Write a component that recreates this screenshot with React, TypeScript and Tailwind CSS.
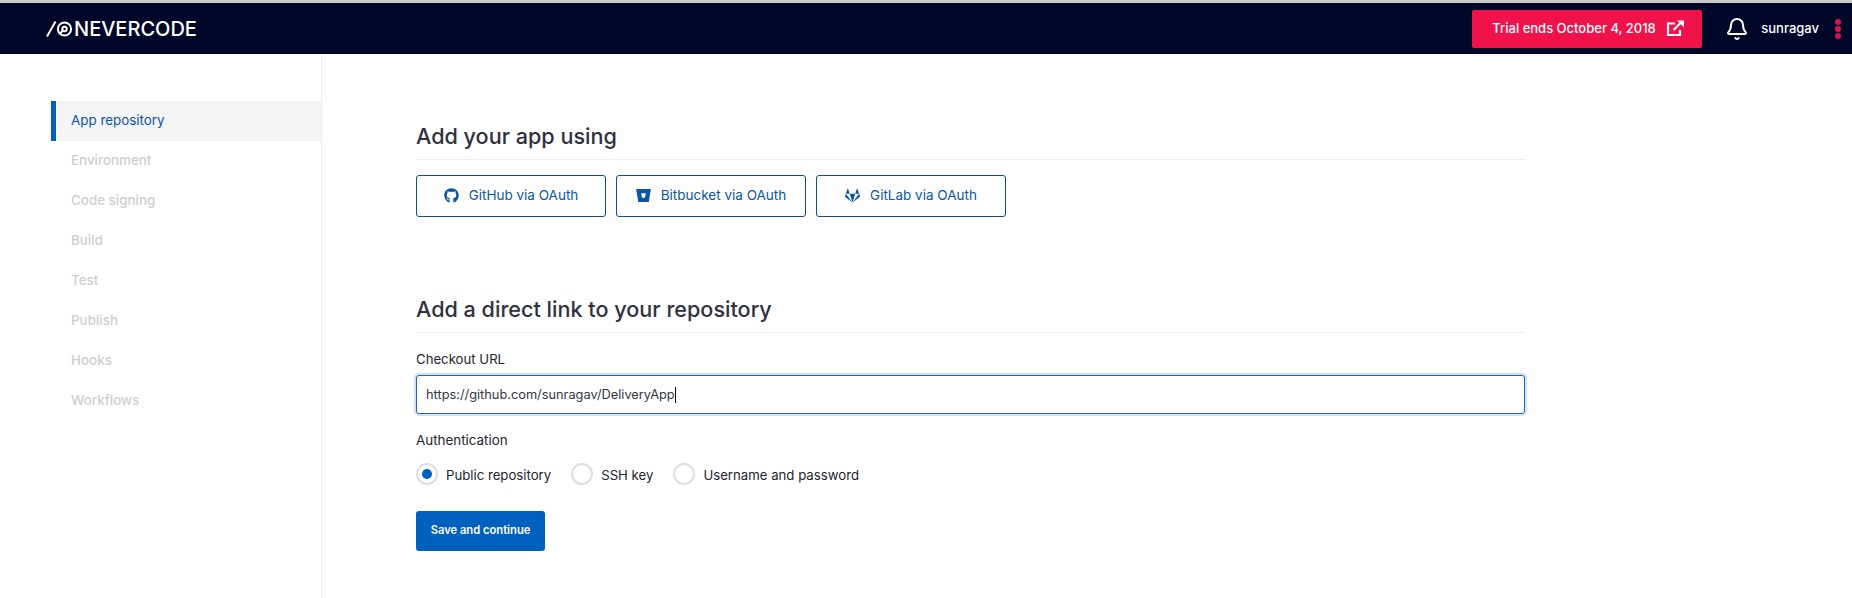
import React from "react";
import { Bell } from "lucide-react";
import { FaGithub, FaBitbucket, FaGitlab } from "react-icons/fa";

const font = { fontFamily: "Inter, 'Liberation Sans', sans-serif" };

const steps = ["Environment", "Code signing", "Build", "Test", "Publish", "Hooks", "Workflows"];

function Logo() {
  return (
    <div className="flex items-center text-white">
      <svg className="shrink-0" width="28" height="16" viewBox="0 0 28 16" fill="none" stroke="currentColor" strokeWidth="2">
        <path d="M1 15.5 L9.5 0.5" />
        <circle cx="18.5" cy="8" r="6.6" />
        <circle cx="18.5" cy="8" r="2.2" />
        <path d="M13.5 13 L17 9.5" />
      </svg>
      <span className="text-[20px] leading-none font-medium">NEVERCODE</span>
    </div>
  );
}

function ExternalIcon() {
  return (
    <svg width="19" height="17" viewBox="0 0 19 17" fill="none" stroke="currentColor" strokeWidth="2.2">
      <path d="M9 3.5 H2 V15 H14 V10" />
      <path d="M7.5 10 L15 2.5" />
      <path d="M11 0.5 H18 V7.5 Z" fill="currentColor" stroke="none" />
    </svg>
  );
}

function OauthButton({ icon, label }: { icon: React.ReactNode; label: string }) {
  return (
    <button className="flex h-[42px] w-[190px] items-center justify-center gap-[10px] rounded-[3px] border border-[#0b4f92] pb-[2px] text-[13.5px] text-[#0b55a5]">
      {icon}
      {label}
    </button>
  );
}

function Radio({ label, checked }: { label: string; checked?: boolean }) {
  return (
    <label className="flex items-center gap-2 text-[13.2px] text-[#22252e]">
      <span className="flex h-[22px] w-[22px] items-center justify-center rounded-full border-2 border-[#dedede]">
        {checked && <span className="h-[10px] w-[10px] rounded-full bg-[#0060bd]" />}
      </span>
      <span className="pt-[3px]">{label}</span>
    </label>
  );
}

export default function App() {
  return (
    <div className="flex h-[598px] flex-col overflow-hidden bg-white" style={font}>
      <div className="h-[3px] bg-[#c9c9c9]" />
      {/* top bar */}
      <header className="flex h-[51px] items-center justify-between bg-[#000729] pl-[46px] pr-[11px]">
        <Logo />
        <div className="flex items-center">
          <a className="flex h-[38px] w-[230px] items-center gap-[10px] rounded-[2px] bg-[#f0124a] pl-5 text-[13px] font-medium text-white">
            Trial ends October 4, 2018
            <ExternalIcon />
          </a>
          <Bell size={24} strokeWidth={2} className="ml-[23px] text-white" />
          <span className="ml-[12px] text-[13px] font-medium text-white">sunragav</span>
          <div className="ml-[16px] flex flex-col gap-[1px]">
            <span className="h-[6px] w-[6px] rounded-full bg-[#e0114a]" />
            <span className="h-[6px] w-[6px] rounded-full bg-[#e0114a]" />
            <span className="h-[6px] w-[6px] rounded-full bg-[#e0114a]" />
          </div>
        </div>
      </header>

      <div className="flex flex-1">
        {/* sidebar */}
        <aside className="w-[322px] border-r border-[#eeeeee] pl-[51px] pt-[47px]">
          <div className="flex h-10 items-center border-l-[5px] border-[#0060bd] bg-[#f4f4f4] pb-[1px] pl-[15px] text-[13.4px] text-[#0b55a5]">
            App repository
          </div>
          {steps.map((s) => (
            <div key={s} className="flex h-10 items-center pb-[1px] pl-5 text-[13.4px] font-medium text-[#cecece]">
              {s}
            </div>
          ))}
        </aside>

        {/* content */}
        <main className="ml-[94px] w-[1109px] pt-[67px]">
          <h2 className="border-b border-[#eeeeee] pb-[8px] text-[21.6px] leading-[30px] font-medium text-[#2f3140]">
            Add your app using
          </h2>
          <div className="mt-[15px] flex gap-[10px]">
            <OauthButton icon={<FaGithub size={15} />} label="GitHub via OAuth" />
            <OauthButton icon={<FaBitbucket size={15} />} label="Bitbucket via OAuth" />
            <OauthButton icon={<FaGitlab size={15} />} label="GitLab via OAuth" />
          </div>

          <h2 className="mt-[77px] border-b border-[#eeeeee] pb-[8px] text-[21.6px] leading-[30px] font-medium text-[#2f3140]">
            Add a direct link to your repository
          </h2>

          <div className="mt-[17px] text-[13.2px] leading-[18px] text-[#22252e]">Checkout URL</div>
          <div className="mt-[7px] flex h-[39px] items-center rounded-[3px] border border-[#2a62a8] pl-[9px] text-[12.8px] text-[#33363f] shadow-[0_0_0_2px_#cfe3f8]">
            https://github.com/sunragav/DeliveryApp
            <span className="h-[16px] w-px bg-[#111111]" />
          </div>

          <div className="mt-[17px] text-[13.4px] leading-[18px] text-[#22252e]">Authentication</div>
          <div className="mt-[14px] flex gap-5">
            <Radio label="Public repository" checked />
            <Radio label="SSH key" />
            <Radio label="Username and password" />
          </div>

          <button className="mt-[25px] h-10 w-[129px] rounded-[3px] bg-[#0060bd] text-[11.2px] font-semibold text-white">
            Save and continue
          </button>
        </main>
      </div>
    </div>
  );
}
